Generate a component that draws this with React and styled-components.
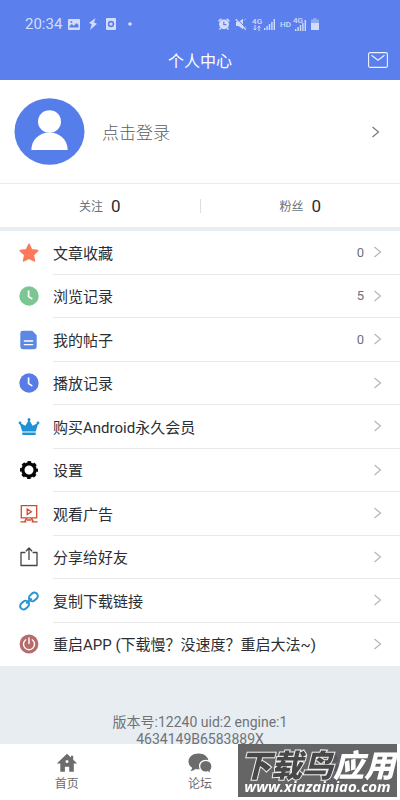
// Frameworks
import React from 'react'
import styled, { createGlobalStyle } from 'styled-components'

const GlobalStyle = createGlobalStyle`
  * { box-sizing: border-box; }
  body {
    margin: 0;
    background: #e8edf2;
    color: #2b2e33;
    font-family: Roboto, "Noto Sans CJK SC", sans-serif;
    font-size: 15px;
  }
  button, a { font: inherit; color: inherit; text-decoration: none; }
  button { border: 0; background: none; padding: 0; text-align: left; cursor: pointer; }
  svg { display: block; flex: none; }
`

const Page = styled.div`
  padding-bottom: 52px;
`
const Header = styled.header`
  background: #5b80ee;
  color: #fff;
`
const StatusBar = styled.div`
  display: flex;
  align-items: center;
  justify-content: space-between;
  height: 40px;
  padding: 8px 81px 0 25px;
  color: #d3ddfa;
`
const StatusGroup = styled.div`
  display: flex;
  align-items: center;
  gap: ${props => props.$gap}px;
`
const Time = styled.span`
  font-size: 15px;
  margin-right: -3px;
`
const Network = styled.span`
  display: flex;
  flex-direction: column;
  align-items: center;
  font-size: 8px;
  line-height: 7px;
  font-weight: 500;
`
const RoamingSignal = styled.div`
  display: flex;
  align-items: flex-end;
  height: 14px;

  ${Network} {
    align-self: flex-start;
    margin-right: -8px;
  }
`
const TitleBar = styled.div`
  display: grid;
  grid-template-columns: 1fr auto 1fr;
  align-items: center;
  height: 40px;
  padding: 0 12px;
`
const Title = styled.h1`
  grid-column: 2;
  margin: 0;
  font-size: 16px;
  font-weight: 400;
`
const MailButton = styled.button`
  justify-self: end;
`
const Profile = styled.button`
  display: flex;
  align-items: center;
  width: 100%;
  height: 103px;
  padding: 0 20px 0 14px;
  background: #fff;
  color: #5c5e62;
  font-size: 17px;
`
const ProfileName = styled.span`
  flex: 1;
  margin-left: 17px;
  font-weight: 300;
`
const Stats = styled.div`
  display: grid;
  grid-template-columns: 1fr 1px 1fr;
  align-items: center;
  height: 44px;
  background: #fff;
  border-top: 1px solid #ebebed;
`
const Stat = styled.a`
  display: flex;
  align-items: center;
  justify-content: center;
  gap: 8px;
  color: #6b7179;
  font-size: 12px;
`
const StatValue = styled.span`
  color: #2b2e33;
  font-size: 17px;
`
const StatDivider = styled.span`
  height: 14px;
  background: #dcdee2;
`
const Menu = styled.ul`
  display: grid;
  grid-auto-rows: 1fr;
  min-height: 435px;
  margin: 4px 0 0;
  padding: 0;
  background: #fff;
  list-style: none;
`
const MenuItem = styled.li`
  display: flex;
`
const MenuButton = styled.button`
  display: flex;
  align-items: center;
  flex: 1;
  padding-left: 18px;
`
const MenuBody = styled.span`
  display: flex;
  align-items: center;
  flex: 1;
  align-self: stretch;
  margin-left: 13px;
  padding-right: 18px;
  border-bottom: 1px solid #e9eaec;
  ${MenuItem}:last-child & { border-bottom-color: transparent; }
`
const MenuLabel = styled.span`
  flex: 1;
`
const Count = styled.span`
  margin-right: 9px;
  color: #6b7179;
  font-size: 13px;
`
const Version = styled.p`
  margin: 0;
  padding: 48px 20px 0;
  color: #6f7378;
  font-size: 14px;
  line-height: 17px;
  text-align: center;
`
const TabBar = styled.nav`
  position: fixed;
  right: 0;
  bottom: 0;
  left: 0;
  display: grid;
  grid-template-columns: repeat(3, 1fr);
  height: 56px;
  background: #fff;
`
const Tab = styled.a`
  display: flex;
  flex-direction: column;
  align-items: center;
  gap: 1px;
  padding-top: 8px;
  color: ${props => (props.$active ? '#5b80ee' : '#6c6c6c')};
  font-size: 12px;
  line-height: 18px;
`
const Watermark = styled.div`
  position: absolute;
  top: 0;
  right: 3px;
  width: 159px;
  height: 53px;
  padding-top: 6px;
  background: rgba(84, 84, 84, 0.9);
  color: #fff;
  text-align: center;
  white-space: nowrap;
`
const Brand = styled.div`
  font-family: "Noto Sans CJK SC", sans-serif;
  font-size: 31px;
  font-style: italic;
  font-weight: 900;
  line-height: 27px;
`
const BrandDark = styled.span`
  color: #484848;
  -webkit-text-stroke: 2px #eee;
  paint-order: stroke fill;
`
const Site = styled.div`
  font-family: "Open Sans", sans-serif;
  font-size: 15px;
  font-style: italic;
  font-weight: 700;
  line-height: 19px;
`

const Chevron = ({ dark }) => (
  <svg width="9" height="12" viewBox="0 0 9 12" fill="none" stroke={dark ? '#777a80' : '#b4b6ba'} strokeWidth="1.2">
    <path d="M1.5 1l6 5-6 5" />
  </svg>
)

const Signal = () => (
  <svg width="11" height="11" viewBox="0 0 11 11" fill="currentColor">
    <path d="M0 9h1.4v2H0zM2.4 7h1.4v4H2.4zM4.8 5h1.4v6H4.8zM7.2 3h1.4v8H7.2zM9.6 0H11v11H9.6z" />
  </svg>
)

const ClockIcon = ({ color }) => (
  <svg width="22" height="22" viewBox="0 0 22 22">
    <circle cx="11" cy="11" r="9.7" fill={color} />
    <path d="M10.6 6v5.6l3.2 2" fill="none" stroke="#fff" strokeWidth="1.7" strokeLinecap="round" strokeLinejoin="round" />
  </svg>
)

const StarIcon = () => (
  <svg width="22" height="22" viewBox="0 0 22 22">
    <path d="M11 2.3l2.6 5.6 6.1.7-4.5 4.2 1.2 6.1-5.4-2.7-5.4 2.7 1.2-6.1-4.5-4.2 6.1-.7z" fill="#fb7a5b" stroke="#fb7a5b" strokeWidth="1.6" strokeLinejoin="round" />
  </svg>
)

const PostIcon = () => (
  <svg width="22" height="22" viewBox="0 0 22 22">
    <path d="M4.7 1.8h9.6l4.4 4.4v11.6a2.4 2.4 0 0 1-2.4 2.4H4.7a2.4 2.4 0 0 1-2.4-2.4V4.2a2.4 2.4 0 0 1 2.4-2.4z" fill="#5d87e4" />
    <path d="M6.3 12h8.4M6.3 15.6h8.4" stroke="#fff" strokeWidth="1.3" strokeLinecap="round" />
  </svg>
)

const CrownIcon = () => (
  <svg width="22" height="22" viewBox="0 0 22 22" fill="#2191d5">
    <path d="M4.2 15.6L1.6 6.8l5.8 3L11 3.6l3.6 6.2 5.800-3-2.600 8.800zM4.300 16.600h13.400v2.300H4.300z" />
    <circle cx="11" cy="3.600" r="1.500" />
    <circle cx="2" cy="7" r="1.400" />
    <circle cx="20" cy="7" r="1.400" />
  </svg>
)

const GearIcon = () => (
  <svg width="22" height="22" viewBox="0 0 22 22" fill="none" stroke="#050505">
    <circle cx="11" cy="11" r="6.1" strokeWidth="3.2" />
    <circle cx="11" cy="11" r="7.9" strokeWidth="2.2" strokeDasharray="3.5 2.705" strokeDashoffset="1.75" />
  </svg>
)

const AdIcon = () => (
  <svg width="22" height="22" viewBox="0 0 22 22" fill="none" stroke="#cf4a34" strokeWidth="1.3">
    <path d="M3.3 2.6h15.4v12.2H3.3zM9.2 6l4.2 2.7-4.2 2.8zM8.6 15l-1.9 3.6M13.4 15l1.9 3.6M2.4 18.9h6M19.6 18.9h-6M8.6 17h4.8" />
  </svg>
)

const ShareIcon = () => (
  <svg width="22" height="22" viewBox="0 0 22 22" fill="none" stroke="#444" strokeWidth="1.3">
    <path d="M7.4 6.500H3V19.500h16V6.500h-4.400M11 14V2.200M7.900 5.200L11 2l3.100 3.200" strokeLinejoin="round" />
  </svg>
)

const LinkIcon = () => (
  <svg width="22" height="22" viewBox="0 0 22 22" fill="none" stroke="#2b93d1" strokeWidth="2">
    <g transform="rotate(-43 11 11)">
      <rect x="0.2" y="7.6" width="9.600" height="6.800" rx="3.400" />
      <rect x="12.200" y="7.600" width="9.600" height="6.800" rx="3.400" />
      <path d="M7.200 11h7.600" />
    </g>
  </svg>
)

const PowerIcon = () => (
  <svg width="22" height="22" viewBox="0 0 22 22" fill="none" strokeLinecap="round">
    <circle cx="11" cy="11" r="9.4" fill="#b56c6c" />
    <path d="M7.7 6.8a5.5 5.5 0 1 0 6.6 0M11 5v5.6" stroke="#fff" strokeWidth="1.4" />
  </svg>
)

const items = [
  { label: '文章收藏', icon: <StarIcon />, count: 0 },
  { label: '浏览记录', icon: <ClockIcon color="#7cc693" />, count: 5 },
  { label: '我的帖子', icon: <PostIcon />, count: 0 },
  { label: '播放记录', icon: <ClockIcon color="#587be6" /> },
  { label: '购买Android永久会员', icon: <CrownIcon /> },
  { label: '设置', icon: <GearIcon /> },
  { label: '观看广告', icon: <AdIcon /> },
  { label: '分享给好友', icon: <ShareIcon /> },
  { label: '复制下载链接', icon: <LinkIcon /> },
  { label: '重启APP (下载慢？没速度？重启大法~)', icon: <PowerIcon /> }
]

const Status = () => (
  <StatusBar>
    <StatusGroup $gap={9}>
      <Time>20:34</Time>
      <svg width="12" height="11" viewBox="0 0 12 11">
        <rect width="12" height="11" rx="1" fill="currentColor" />
        <path d="M1.5 8.5V7l2.3-2 2 1.7L8.5 4l2 2v2.5z" fill="#5b80ee" />
        <circle cx="3.4" cy="3" r="1" fill="#5b80ee" />
      </svg>
      <svg width="8" height="12" viewBox="0 0 8 12" fill="currentColor">
        <path d="M6.5 0L0 5l2.8 1.3L1 12l7-6.3-3-1.2z" />
      </svg>
      <svg width="10" height="12" viewBox="0 0 10 12">
        <rect width="10" height="12" rx="1" fill="currentColor" />
        <circle cx="5" cy="6" r="2.4" fill="none" stroke="#5b80ee" strokeWidth="1.6" />
      </svg>
      <svg width="14" height="4" viewBox="0 0 14 4" fill="currentColor">
        <circle cx="5" cy="2" r="1.8" />
      </svg>
    </StatusGroup>
    <StatusGroup $gap={5}>
      <svg width="12" height="12" viewBox="0 0 12 12" fill="currentColor">
        <circle cx="6" cy="6.3" r="4.9" />
        <path d="M0 2.8L2.8.2l1 1-2.8 2.6zM12 2.8L9.2.2l-1 1L11 3.8zM2 9.5l1.4 1.2L2 12l-1-1zM10 9.5l-1.4 1.2L10 12l1-1z" />
        <path d="M5.8 3.6v3h2.6" fill="none" stroke="#5b80ee" strokeWidth="1.2" />
      </svg>
      <svg width="12" height="12" viewBox="0 0 12 12" fill="currentColor">
        <path d="M1 4h2.5L8 .8v10.4L3.500 8H1z" />
        <path d="M9.500 2l1.200-1M9.600 8.600l1.600 1" stroke="currentColor" />
        <path d="M1.600.2l10 10.600" stroke="#5b80ee" strokeWidth="1" />
        <path d="M.8 1.200l10 10.400" stroke="currentColor" strokeWidth="1.300" />
      </svg>
      <StatusGroup $gap={2}>
        <Network>
          4G
          <svg width="8" height="6" viewBox="0 0 8 6" fill="none" stroke="currentColor">
            <path d="M2 0v5M.5 3.5L2 5l1.5-1.5M6 6V1M4.5 2.5L6 1l1.5 1.5" />
          </svg>
        </Network>
        <Signal />
      </StatusGroup>
      <StatusGroup $gap={2}>
        <Network>HD</Network>
        <RoamingSignal>
          <Network>4G</Network>
          <Signal />
        </RoamingSignal>
      </StatusGroup>
      <svg width="8" height="12" viewBox="0 0 8 12" fill="currentColor">
        <path d="M2.5 0h3v1.5H8V5H0V1.5h2.5z" opacity="0.45" />
        <path d="M0 5h8v7H0z" />
      </svg>
    </StatusGroup>
  </StatusBar>
)

const App = () => (
  <Page>
    <GlobalStyle />
    <Header>
      <Status />
      <TitleBar>
        <Title>个人中心</Title>
        <MailButton aria-label="消息">
          <svg width="20" height="16" viewBox="0 0 20 16" fill="none" stroke="#eef2fd" strokeWidth="1.1">
            <rect x="0.6" y="0.6" width="18.8" height="14.8" rx="1.5" />
            <path d="M3.5 3.3L10 8.3l6.5-5" />
          </svg>
        </MailButton>
      </TitleBar>
    </Header>
    <Profile>
      <svg width="71" height="67" viewBox="0 0 71 67">
        <ellipse cx="35.5" cy="33.5" rx="35" ry="33.3" fill="#567eeb" />
        <ellipse cx="35.5" cy="23.5" rx="11.5" ry="11.3" fill="#fff" />
        <path d="M17.3 52c0-10 8-17.5 18.2-17.5S53.7 42 53.7 52z" fill="#fff" />
      </svg>
      <ProfileName>点击登录</ProfileName>
      <Chevron dark />
    </Profile>
    <Stats>
      <Stat href="#follow">关注 <StatValue>0</StatValue></Stat>
      <StatDivider />
      <Stat href="#fans">粉丝 <StatValue>0</StatValue></Stat>
    </Stats>
    <Menu>
      {items.map(item => (
        <MenuItem key={item.label}>
          <MenuButton>
            {item.icon}
            <MenuBody>
              <MenuLabel>{item.label}</MenuLabel>
              {item.count !== undefined && <Count>{item.count}</Count>}
              <Chevron />
            </MenuBody>
          </MenuButton>
        </MenuItem>
      ))}
    </Menu>
    <Version>版本号:12240 uid:2 engine:1<br />4634149B6583889X</Version>
    <TabBar>
      <Tab href="#home">
        <svg width="22" height="22" viewBox="0 0 22 22" fill="currentColor">
          <path d="M11 1.8l4 3.8V3.8h2.2v3.9l4 3.9h-3.4v8.2h-4.6v-5H8.9v5H4.3v-8.2H.8z" />
          <circle cx="11" cy="9.5" r="1.5" fill="#fff" />
        </svg>
        首页
      </Tab>
      <Tab href="#forum">
        <svg width="24" height="22" viewBox="0 0 24 22" fill="currentColor">
          <path d="M10.500 1.500C4.800 1.500.500 4.900.500 9.500c0 2.700 1.400 4.900 3.600 6.300-.2 1.300-.8 2.400-1.900 3.300 2.200 0 4-.7 5.300-2 6.500 1 13-2.300 13-7.600 0-4.600-4.300-8-10-8z" />
          <path d="M17.800 8.300c-3.700 0-6.200 2.700-6.200 5.900s2.500 5.900 6.200 5.900c.7 0 1.300-.1 1.900-.3 1 .9 2.200 1.500 3.900 1.500-.8-.7-1.200-1.600-1.300-2.600 1.100-1 1.700-2.600 1.700-4.500 0-3.200-2.500-5.900-6.200-5.900z" stroke="#fff" strokeWidth="1.300" />
        </svg>
        论坛
      </Tab>
      <Tab href="#mine" $active>
        <svg width="22" height="22" viewBox="0 0 22 22" fill="currentColor">
          <circle cx="11" cy="6.5" r="4.8" />
          <path d="M2 19c0-5 4-7.3 9-7.3s9 2.3 9 7.3z" />
        </svg>
        我的
      </Tab>
      <Watermark>
        <Brand><BrandDark>下载鸟</BrandDark>应用</Brand>
        <Site>www.xiazainiao.com</Site>
      </Watermark>
    </TabBar>
  </Page>
)

export default App
